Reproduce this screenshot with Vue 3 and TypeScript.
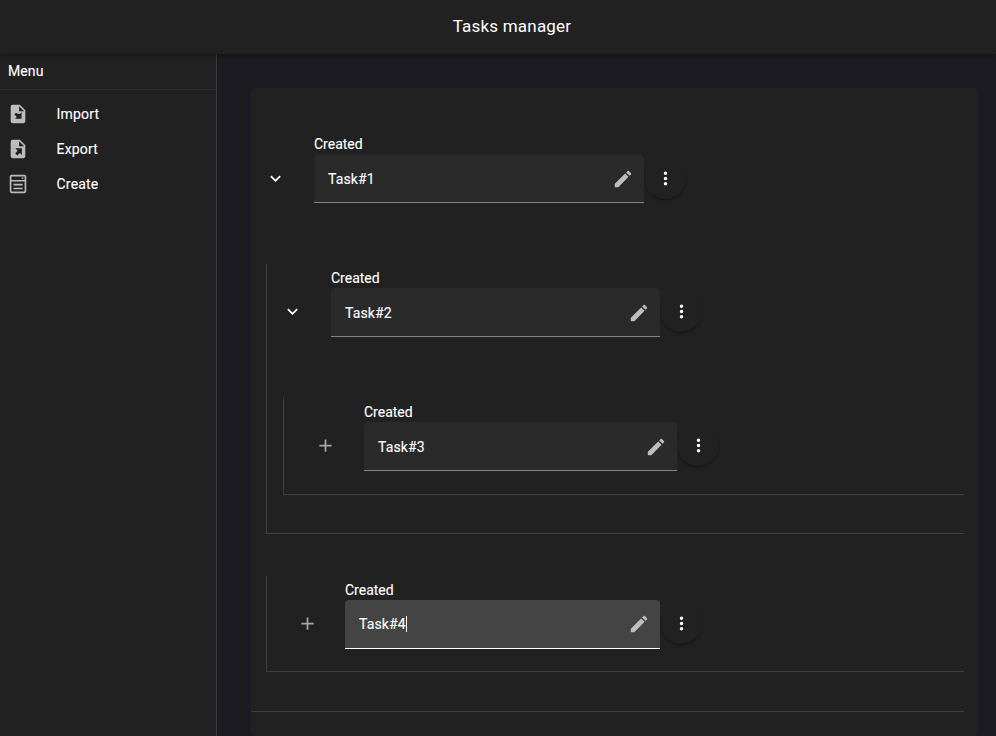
<script setup lang="ts">
import { h, type FunctionalComponent, type VNode } from 'vue'

interface Task {
  title: string
  status: string
  indent: number
  fieldWidth: number
  focused?: boolean
  children: Task[]
}

const icons = {
  chevron: 'M7.41 8.58 12 13.17l4.59-4.59L18 10l-6 6-6-6z',
  plus: 'M19 13h-6v6h-2v-6H5v-2h6V5h2v6h6z',
  pencil:
    'M20.71 7.04c.39-.39.39-1.04 0-1.41l-2.34-2.34c-.37-.39-1.02-.39-1.41 0l-1.55 1.55 3.75 3.75zM3.4 16.85q-.4.4-.4.9V20q0 1 1 1h2.25q.5 0 .9-.4L18.1 9.64l-3.75-3.75z',
  dots: 'M12 16a2 2 0 1 1 0 4 2 2 0 0 1 0-4m0-6a2 2 0 1 1 0 4 2 2 0 0 1 0-4m0-6a2 2 0 1 1 0 4 2 2 0 0 1 0-4',
}

const tasks: Task[] = [
  {
    title: 'Task#1', status: 'Created', indent: 63, fieldWidth: 330,
    children: [
      {
        title: 'Task#2', status: 'Created', indent: 64, fieldWidth: 329,
        children: [{ title: 'Task#3', status: 'Created', indent: 80, fieldWidth: 313, children: [] }],
      },
      { title: 'Task#4', status: 'Created', indent: 78, fieldWidth: 315, focused: true, children: [] },
    ],
  },
]

const menu = [
  {
    label: 'Import',
    path: 'M6 2h8l6 6v12a2 2 0 0 1-2 2H6a2 2 0 0 1-2-2V4a2 2 0 0 1 2-2M13.2 3.5V9h5.5zM9.6 10.8 8 12.4l2.7 2.8-2 2h7.2V10l-2.2 2.2z',
  },
  {
    label: 'Export',
    path: 'M6 2h8l6 6v12a2 2 0 0 1-2 2H6a2 2 0 0 1-2-2V4a2 2 0 0 1 2-2M13.2 3.5V9h5.5zM9.1 11.3h7.1v7.2L14 16.3l-2.7 2.8-2.4-2.4 2.6-2.7z',
  },
  {
    label: 'Create',
    path: 'M5 2h14a2 2 0 0 1 2 2v16a2 2 0 0 1-2 2H5a2 2 0 0 1-2-2V4a2 2 0 0 1 2-2M4.8 3.8V7.6h14.4V3.8zM4.8 9.4v10.8h14.4V9.4zM16 4.8h2v1.6h-2zM7 11.8h10v1.8H7zM7 16h10v1.8H7z',
  },
]

const icon = (path: string, name: string): VNode =>
  h('svg', { class: ['icon', name], viewBox: '0 0 24 24' }, [h('path', { d: path })])

const TaskNode: FunctionalComponent<{ task: Task }> = ({ task }) =>
  h('li', { class: ['node', { leaf: !task.children.length }] }, [
    h('div', { class: 'row' }, [
      h(
        'button',
        { class: 'toggle', style: { width: `${task.indent}px` } },
        [task.children.length ? icon(icons.chevron, 'chevron') : icon(icons.plus, 'plus')],
      ),
      h('div', { class: 'entry', style: { width: `${task.fieldWidth}px` } }, [
        h('span', { class: 'status' }, task.status),
        h('div', { class: ['field', { focused: task.focused }] }, [
          h('span', { class: 'value' }, task.title),
          icon(icons.pencil, 'pencil'),
        ]),
      ]),
      h('button', { class: 'more' }, [icon(icons.dots, 'dots')]),
    ]),
    task.children.length
      ? h('ul', { class: 'children' }, task.children.map((child) => h(TaskNode, { task: child })))
      : null,
  ])
TaskNode.props = ['task']
</script>

<template>
  <div class="app">
    <header class="bar">Tasks manager</header>
    <div class="body">
      <aside class="side">
        <div class="side-title">Menu</div>
        <nav>
          <a v-for="item in menu" :key="item.label" class="item">
            <svg class="item-icon" viewBox="0 0 24 24"><path fill-rule="evenodd" :d="item.path" /></svg>
            {{ item.label }}
          </a>
        </nav>
      </aside>
      <main class="content">
        <section class="card">
          <ul class="tree">
            <TaskNode v-for="task in tasks" :key="task.title" :task="task" />
          </ul>
        </section>
      </main>
    </div>
  </div>
</template>

<style>
body {
  margin: 0;
  background: #1c1b22;
}
</style>

<style scoped>
.app {
  height: 736px;
  overflow: hidden;
  display: flex;
  flex-direction: column;
  background: #1c1b22;
  color: #fff;
  font: 400 14px/20px Roboto, sans-serif;
  letter-spacing: 0.1px;
  -webkit-text-stroke: 0.12px currentColor;
}
.bar {
  position: relative;
  z-index: 1;
  flex: 0 0 54px;
  box-sizing: border-box;
  padding: 0 0 2px 28px;
  display: flex;
  align-items: center;
  justify-content: center;
  background: #212121;
  font-size: 17px;
  letter-spacing: 0.2px;
  -webkit-text-stroke: 0;
  box-shadow: 0 1px 5px rgba(0, 0, 0, 0.4);
}
.body {
  flex: 1;
  min-height: 0;
  display: flex;
}
.side {
  flex: 0 0 216px;
  background: #212121;
  border-right: 1px solid #3b3b3b;
}
.side-title {
  height: 35px;
  padding-left: 8px;
  line-height: 35px;
  border-bottom: 1px solid #2d2d2d;
}
nav {
  padding-top: 6px;
}
.item {
  display: flex;
  align-items: center;
  height: 35px;
  padding-left: 7px;
  letter-spacing: 0.2px;
}
.item-icon {
  width: 22px;
  height: 22px;
  margin-right: 27.5px;
  fill: #bcbcbc;
}
.content {
  flex: 1;
  padding: 34px 18px 0 34px;
}
.card {
  height: 100%;
  box-sizing: border-box;
  padding: 42px 14px 0 0;
  border-radius: 4px;
  background: #212121;
}
.tree {
  margin: 0;
  padding: 0 0 39px;
  list-style: none;
  border-bottom: 1px solid #3e3e3e;
}
.tree :deep(.row) {
  display: flex;
  height: 97px;
}
.tree > :deep(.node > .row) {
  height: 98px;
}
.tree > :deep(.node > .row > .entry) {
  padding-top: 25px;
}
.tree :deep(.children) {
  display: flex;
  flex-direction: column;
  gap: 42px;
  margin: 36px 0 0;
  padding: 0 0 0 15px;
  list-style: none;
}
.tree :deep(.children .node) {
  border-left: 1px solid #3e3e3e;
  border-bottom: 1px solid #3e3e3e;
}
.tree :deep(.children .node:not(.leaf)) {
  padding-bottom: 38px;
}
.tree :deep(.children .children) {
  margin-top: 37px;
  padding-left: 16px;
}
.tree :deep(.leaf .row) {
  height: 96px;
}
.tree :deep(.children > .leaf:last-child:not(:first-child) > .row) {
  height: 95px;
}
.tree :deep(button) {
  padding: 0;
  border: 0;
  background: none;
  color: inherit;
}
.tree :deep(.icon) {
  display: block;
  width: 21px;
  height: 21px;
  fill: #fff;
}
.tree :deep(.toggle) {
  display: flex;
  flex: none;
  justify-content: flex-end;
  padding: 37px 28px 0 0;
}
.tree > :deep(.node > .row > .toggle) {
  padding-top: 38px;
}
.tree :deep(.leaf .toggle) {
  padding-right: 28px;
}
.tree :deep(.leaf:last-child:not(:first-child) .toggle) {
  padding-right: 27px;
}
.tree :deep(.plus) {
  width: 21px;
  height: 21px;
  fill: #a8a8a8;
}
.tree :deep(.entry) {
  position: relative;
  flex: none;
  box-sizing: border-box;
  padding-top: 24px;
}
.tree :deep(.status) {
  position: absolute;
  bottom: calc(100% - 24px);
  left: 0;
  letter-spacing: 0;
}
.tree :deep(.field) {
  display: flex;
  align-items: center;
  justify-content: space-between;
  box-sizing: border-box;
  height: 49px;
  padding: 1px 10px 0 14px;
  border-bottom: 1px solid #848484;
  border-radius: 4px 4px 0 0;
  background: #2a2a2a;
}
.tree > :deep(.node > .row > .entry > .field) {
  height: 48px;
  padding-top: 0;
}
.tree :deep(.field.focused) {
  padding-top: 0;
  border-color: #fff;
  background: #444;
}
.tree :deep(.focused .value) {
  height: 16px;
  line-height: 16px;
  letter-spacing: 0.1px;
  border-right: 1px solid #fff;
}
.tree :deep(.pencil) {
  width: 22px;
  height: 22px;
  fill: #bebebe;
}
.tree :deep(.more) {
  display: flex;
  flex: none;
  align-items: center;
  justify-content: center;
  width: 42px;
  height: 42px;
  margin-top: 26px;
  border-radius: 50%;
  background: #212121;
  box-shadow: 0 2px 2px -1px rgba(0, 0, 0, 0.3), 0 1px 3px rgba(0, 0, 0, 0.15);
}
.tree > :deep(.node > .row > .more) {
  margin-top: 27px;
}
</style>
